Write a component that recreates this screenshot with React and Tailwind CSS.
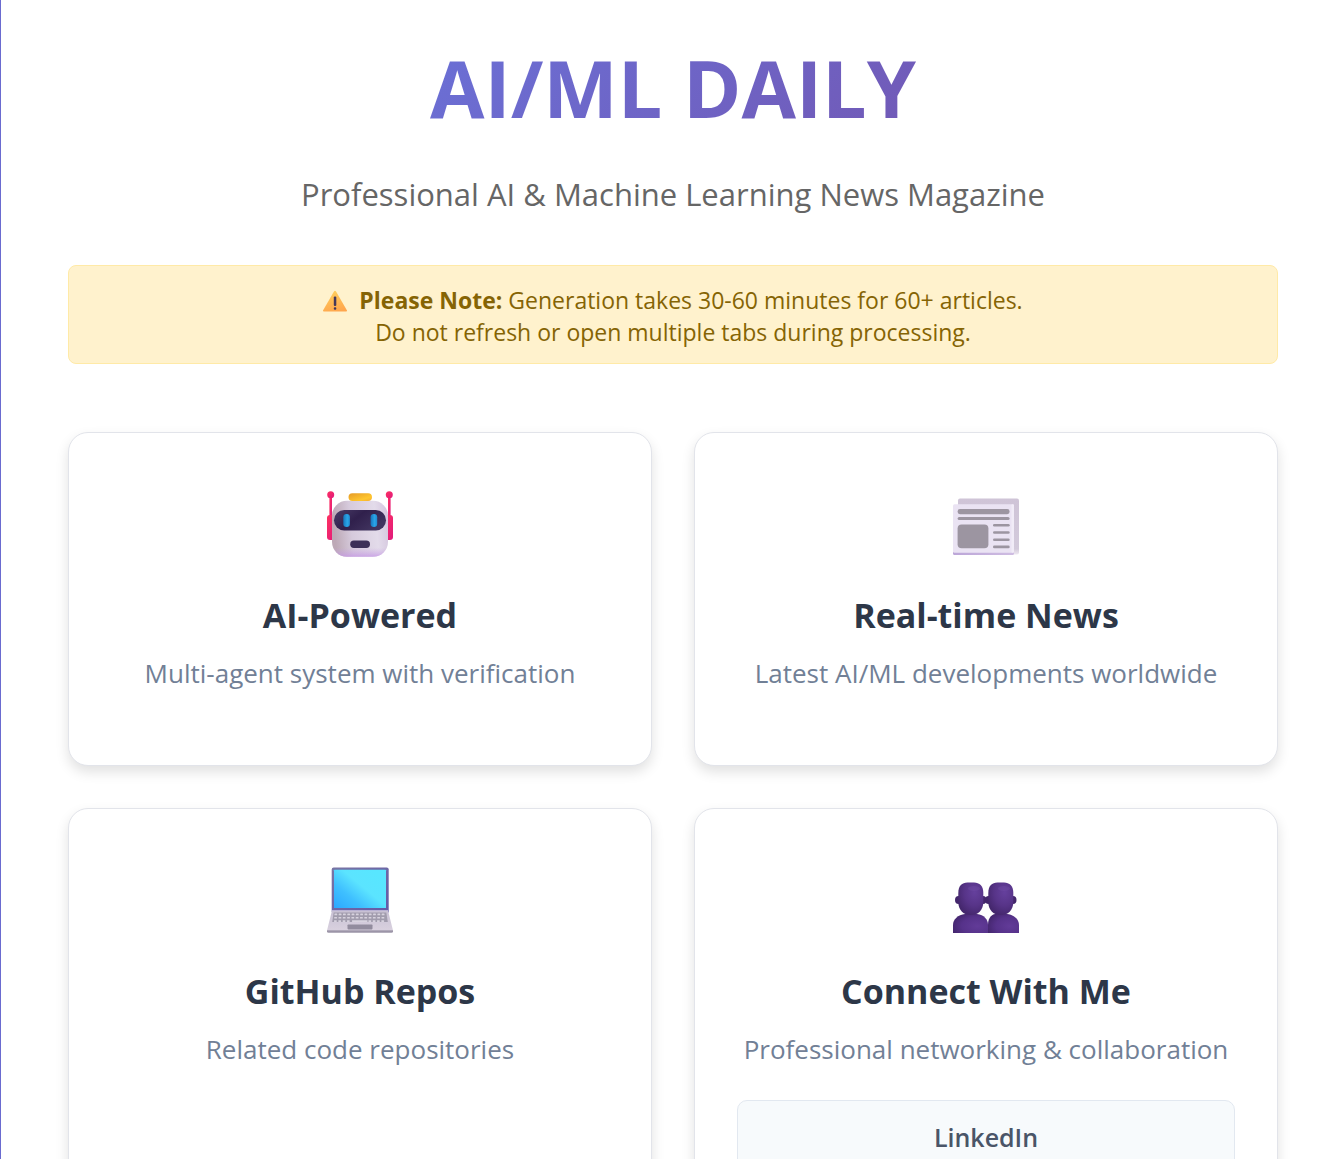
function WarningIcon() {
  return (
    <svg viewBox="0 0 24 22" className="mr-3 inline-block h-[22px] w-6 align-[-3px]" aria-hidden="true">
      <defs>
        <linearGradient id="warn" x1="0.3" y1="0" x2="0.6" y2="1">
          <stop offset="0" stopColor="#ffcf5c" />
          <stop offset="1" stopColor="#ffa64d" />
        </linearGradient>
      </defs>
      <path d="M11.1 1.3q.9-1 1.8 0L24 20.4q.2 1-.8 1.1H.8q-1-.1-.8-1.1z" fill="url(#warn)" />
      <rect x="10.8" y="6.5" width="2.5" height="9.4" rx="1" fill="#45385a" />
      <rect x="10.8" y="17.3" width="2.5" height="2.5" rx="1" fill="#45385a" />
    </svg>
  );
}

function RobotIcon() {
  return (
    <svg viewBox="0 0 66 66" className="size-[66px]" aria-hidden="true">
      <defs>
        <linearGradient id="rb-head" x1="0" y1="0.1" x2="1" y2="0">
          <stop offset="0" stopColor="#bda9b6" />
          <stop offset="0.3" stopColor="#d6cadc" />
          <stop offset="0.75" stopColor="#e3dbea" />
          <stop offset="1" stopColor="#d3c4dd" />
        </linearGradient>
        <linearGradient id="rb-chin" x1="0" y1="0" x2="0" y2="1">
          <stop offset="0.84" stopColor="#c9a3e4" stopOpacity="0" />
          <stop offset="1" stopColor="#c596e6" stopOpacity="0.75" />
        </linearGradient>
        <linearGradient id="rb-visor" x1="0" y1="0" x2="1" y2="0.5">
          <stop offset="0" stopColor="#4a3d68" />
          <stop offset="0.5" stopColor="#30204c" />
          <stop offset="1" stopColor="#41345f" />
        </linearGradient>
        <linearGradient id="rb-top" x1="0" y1="0" x2="1" y2="1">
          <stop offset="0" stopColor="#e59a26" />
          <stop offset="0.7" stopColor="#ffc62e" />
          <stop offset="1" stopColor="#f5ad31" />
        </linearGradient>
        <linearGradient id="rb-ear" x1="0" y1="0" x2="1" y2="1">
          <stop offset="0" stopColor="#ff315f" />
          <stop offset="1" stopColor="#df197e" />
        </linearGradient>
        <linearGradient id="rb-eye" x1="0" y1="0" x2="1" y2="0">
          <stop offset="0" stopColor="#1676bd" />
          <stop offset="0.6" stopColor="#2aa5e8" />
          <stop offset="1" stopColor="#208bd2" />
        </linearGradient>
      </defs>
      <g fill="url(#rb-ear)">
        <rect x="2.4" y="4" width="2.6" height="25" />
        <rect x="61" y="4" width="2.6" height="25" />
        <circle cx="3.7" cy="3.7" r="3.5" />
        <circle cx="62.3" cy="3.7" r="3.5" />
        <rect x="0" y="24" width="9" height="25" rx="3" />
        <rect x="57" y="24" width="9" height="25" rx="3" />
      </g>
      <rect x="5" y="9.8" width="56" height="56" rx="15" fill="url(#rb-head)" />
      <rect x="5" y="9.8" width="56" height="56" rx="15" fill="url(#rb-chin)" />
      <rect x="21.5" y="2.2" width="23.5" height="7.8" rx="3.9" fill="url(#rb-top)" />
      <rect x="7" y="19" width="52" height="20.5" rx="10.2" fill="url(#rb-visor)" />
      <rect x="16.3" y="23" width="6.6" height="13" rx="3.3" fill="url(#rb-eye)" />
      <rect x="43.6" y="23" width="6.6" height="13" rx="3.3" fill="url(#rb-eye)" />
      <rect x="23.2" y="49.5" width="19.8" height="7.4" rx="3.7" fill="#3d3058" />
    </svg>
  );
}

function NewspaperIcon() {
  return (
    <svg viewBox="0 0 66 66" className="size-[66px]" aria-hidden="true">
      <defs>
        <linearGradient id="np-back" x1="0" y1="0" x2="0" y2="1">
          <stop offset="0" stopColor="#cfc4d7" />
          <stop offset="0.9" stopColor="#d3cadb" />
          <stop offset="1" stopColor="#eee8f1" />
        </linearGradient>
        <linearGradient id="np-edge" x1="0" y1="0" x2="1" y2="0">
          <stop offset="0" stopColor="#bca6d8" />
          <stop offset="1" stopColor="#cfbde2" />
        </linearGradient>
      </defs>
      <rect x="5" y="7.5" width="61" height="56" rx="2" fill="url(#np-back)" />
      <rect x="0" y="15" width="61" height="49" rx="1.5" fill="url(#np-edge)" />
      <rect x="0" y="13.3" width="61" height="48.5" rx="1.5" fill="#eae3f3" />
      <rect x="58.5" y="13.3" width="2.5" height="48.5" rx="1" fill="#f1ecf7" />
      <g fill="#9c95a1">
        <rect x="4.6" y="18" width="52" height="5.2" rx="2.4" />
        <rect x="4.6" y="26" width="52" height="3" rx="1.5" />
        <rect x="4.6" y="33.5" width="30.8" height="23.7" rx="4" />
        <rect x="40" y="33" width="16.7" height="2.6" rx="1.3" />
        <rect x="40" y="40.2" width="16.7" height="2.6" rx="1.3" />
        <rect x="40" y="47.4" width="16.7" height="2.6" rx="1.3" />
        <rect x="40" y="54.6" width="16.7" height="2.6" rx="1.3" />
      </g>
    </svg>
  );
}

const KEY_ROWS = [49.4, 52.7, 56];
const KEY_COLUMNS = [0, 1, 2, 3, 4, 5, 6, 7, 8, 9, 10, 11];

function LaptopIcon() {
  return (
    <svg viewBox="0 0 66 66" className="size-[66px]" aria-hidden="true">
      <defs>
        <linearGradient id="lp-screen" x1="0" y1="1" x2="0.9" y2="0.2">
          <stop offset="0" stopColor="#2ba7ff" />
          <stop offset="0.35" stopColor="#3fc0ff" />
          <stop offset="0.65" stopColor="#5be4ff" />
          <stop offset="1" stopColor="#58e6ff" />
        </linearGradient>
        <linearGradient id="lp-frame" x1="0" y1="0" x2="1" y2="1">
          <stop offset="0" stopColor="#7875a5" />
          <stop offset="1" stopColor="#6359a7" />
        </linearGradient>
        <linearGradient id="lp-base" x1="0" y1="0" x2="0" y2="1">
          <stop offset="0" stopColor="#c7c0d3" />
          <stop offset="1" stopColor="#d9d1df" />
        </linearGradient>
      </defs>
      <rect x="4.7" y="0.5" width="57" height="46" rx="2" fill="url(#lp-frame)" />
      <rect x="7" y="2.7" width="52" height="38.3" rx="0.6" fill="url(#lp-screen)" />
      <path d="M5 43.5h56l5 20H0z" fill="url(#lp-base)" />
      <path d="M5 43h56v1H5z" fill="#b8b1d3" />
      <path d="M0 63.3h66v1q0 1.5-1.5 1.5h-63q-1.5 0-1.5-1.5z" fill="#9c95a8" />
      <path d="M6.7 45.4h52.6l1.5 9.6H5.2z" fill="#a19cad" />
      <g fill="#d8d3df">
        {KEY_ROWS.map((y, row) =>
          KEY_COLUMNS.filter((c) => row !== 2 || c < 4 || c > 7).map((c) => (
            <rect key={`${y}-${c}`} x={7.4 + c * 4.3 - row * 0.2} y={y - 2.8} width="2.8" height="1.7" rx="0.4" />
          ))
        )}
        <rect x="25" y="53.2" width="15.5" height="1.7" rx="0.4" />
      </g>
      <rect x="20.5" y="57.4" width="25" height="5" rx="0.8" fill="#928c9e" />
    </svg>
  );
}

const PEOPLE = [
  { x: 0, body: "M0 66v-9c0-6 5-10 12-11h12c7 1 11 5 11 11v9z" },
  { x: 30, body: "M5 66v-9c0-5 2-10 7-11h12c7 1 12 5 12 11v9z" },
];

function PeopleIcon() {
  return (
    <svg viewBox="0 -1 66 66" className="size-[66px]" aria-hidden="true">
      <defs>
        <radialGradient id="pp-head" cx="0.65" cy="0.3" r="0.75">
          <stop offset="0" stopColor="#65409d" />
          <stop offset="0.55" stopColor="#573488" />
          <stop offset="1" stopColor="#43266b" />
        </radialGradient>
        <radialGradient id="pp-body" cx="0.7" cy="0.6" r="0.75">
          <stop offset="0" stopColor="#623b98" />
          <stop offset="0.6" stopColor="#56328a" />
          <stop offset="1" stopColor="#44266e" />
        </radialGradient>
      </defs>
      {PEOPLE.map(({ x, body }) => (
        <g key={x} transform={`translate(${x} 0)`}>
          <path d={body} fill="url(#pp-body)" />
          <ellipse cx="5.5" cy="32" rx="3.5" ry="4" fill="#43266b" />
          <ellipse cx="30" cy="32" rx="3.5" ry="4" fill="#43266b" />
          <path
            d="M5.3 25C5.3 18 9 14.6 14.5 14.6H21c5.5 0 9.300 3.400 9.300 10.400v9c0 8.500-5.500 13-12.500 13S5.300 42.500 5.300 34z"
            fill="url(#pp-head)"
          />
          <ellipse cx="21" cy="20.5" rx="6" ry="2.5" fill="#7650a8" opacity="0.35" />
        </g>
      ))}
    </svg>
  );
}

function FeatureCard({ icon, title, text, children }) {
  return (
    <article className="flex min-h-[334px] flex-col items-center rounded-[20px] border border-[#e2e4ea] bg-white px-[42px] pt-[58px] pb-[42px] text-center shadow-[0_6px_13px_rgba(0,0,0,0.12)]">
      {icon}
      <h2 className="mt-[35px] text-[34px] leading-[46px] font-bold text-[#2d3748]">{title}</h2>
      <p className="mt-[15px] text-[26px] leading-10 text-[#718096]">{text}</p>
      {children}
    </article>
  );
}

export default function App() {
  return (
    <div className="min-h-screen border-l border-[#6a6bd0] bg-white pr-[66px] pb-16 pl-[67px] font-['Open_Sans','Noto_Sans',sans-serif]">
      <header className="pt-[30px] text-center">
        <h1 className="bg-linear-[135deg,#667eea,#764ba2] bg-clip-text text-[79px] leading-[116px] font-bold text-transparent">
          AI/ML DAILY
        </h1>
        <p className="mt-[25px] text-[31px] leading-[46px] text-[#666666]">
          Professional AI &amp; Machine Learning News Magazine
        </p>
      </header>

      <div
        role="note"
        className="mt-12 rounded-lg border border-[#ffeaa7] bg-[#fff2cd] px-5 pt-[18px] pb-[15px] text-center text-[23px] leading-8 text-[#856404]"
      >
        <WarningIcon />
        <strong className="font-bold">Please Note:</strong> Generation takes 30-60 minutes for 60+ articles.
        <br />
        Do not refresh or open multiple tabs during processing.
      </div>

      <main className="mt-[68px] grid grid-cols-2 gap-[42px]">
        <FeatureCard icon={<RobotIcon />} title="AI-Powered" text="Multi-agent system with verification" />
        <FeatureCard icon={<NewspaperIcon />} title="Real-time News" text="Latest AI/ML developments worldwide" />
        <FeatureCard icon={<LaptopIcon />} title="GitHub Repos" text="Related code repositories" />
        <FeatureCard icon={<PeopleIcon />} title="Connect With Me" text="Professional networking &amp; collaboration">
          <a
            href="#linkedin"
            className="mt-[31px] block w-full rounded-[10px] border border-[#e2e8f0] bg-[#f7fafc] py-4 text-[25px] leading-10 font-semibold text-[#4a5568]"
          >
            LinkedIn
          </a>
        </FeatureCard>
      </main>
    </div>
  );
}
